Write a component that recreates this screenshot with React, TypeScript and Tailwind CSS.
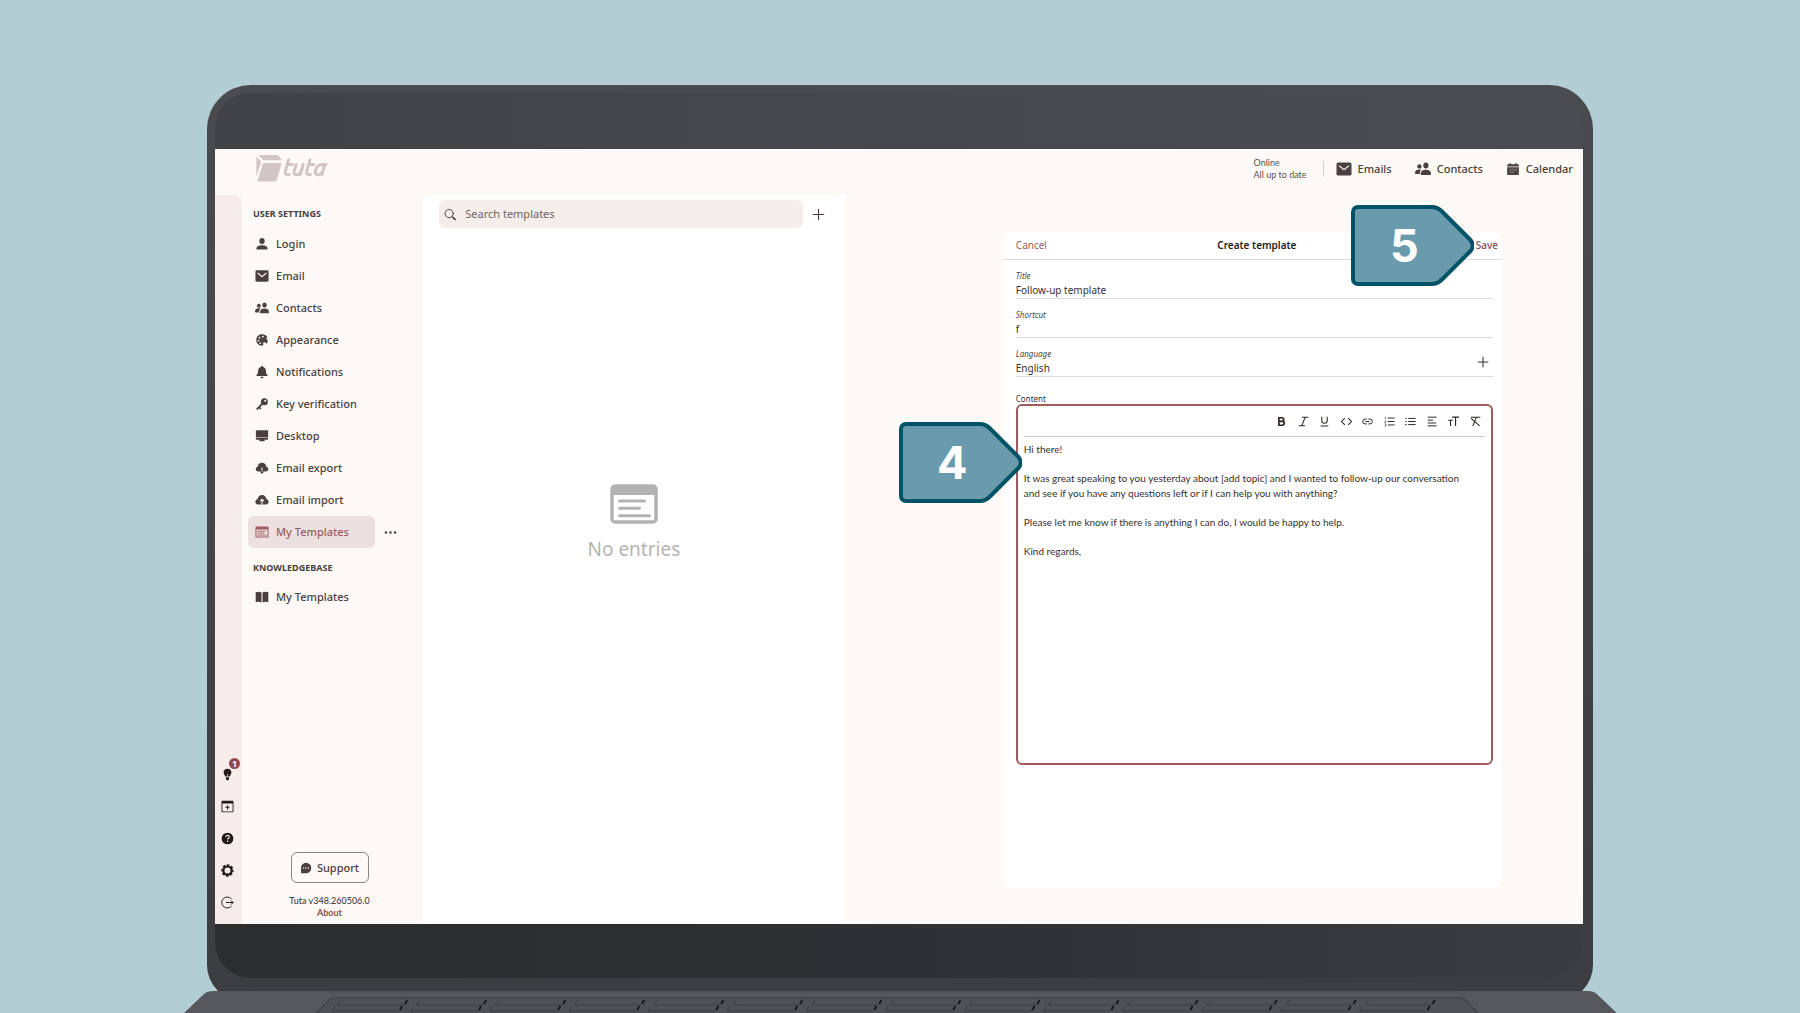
import type { ReactNode } from "react";

type IconProps = { name: string; className?: string };

// All glyphs are drawn on a 16 x 16 grid
const ICONS: Record<string, ReactNode> = {
  person: (
    <g fill="currentColor">
      <ellipse cx="8" cy="4.6" rx="3.1" ry="3.4" />
      <path d="M1.6 13.2c0-3 3.2-3.9 6.4-3.9s6.4.9 6.4 3.9c0 .8-.6 1.2-1.4 1.2H3c-.8 0-1.4-.4-1.4-1.2z" />
    </g>
  ),
  mail: (
    <g>
      <rect x="0.5" y="1.5" width="15" height="13" rx="1.6" fill="currentColor" />
      <path d="M3 4.6l5 4.2 5-4.2" fill="none" stroke="#fdf9f6" strokeWidth="1.2" />
    </g>
  ),
  people: (
    <g fill="currentColor">
      <circle cx="4.4" cy="5.4" r="2.2" />
      <path d="M0 12c0-2.6 1.8-3.6 4.4-3.6.7 0 1.4.1 1.9.3C5.3 9.7 4.7 10.9 4.7 13H.8c-.5 0-.8-.4-.8-1z" />
      <ellipse cx="10.9" cy="4.5" rx="2.6" ry="2.9" />
      <path d="M5.7 13c0-3.1 2.4-4.3 5.2-4.3S16 9.9 16 13c0 .6-.4 1-1 1H6.7c-.6 0-1-.4-1-1z" />
    </g>
  ),
  palette: (
    <g>
      <path
        d="M8 1.5C4.2 1.5 1.5 4.3 1.5 8s2.8 6.5 6.5 6.5c1.3 0 1.8-1 1.4-2-.5-1.2.2-2 1.4-2 1.6.2 2 1.5 2.9 1.5.6-.7.8-2.3.8-3.6 0-.9-1.6-.9-1.6-2 0-1 1.1-.9 1.1-1.8C12.900 2.700 10.600 1.500 8 1.500z"
        fill="currentColor"
      />
      <g fill="#fdf9f6">
        <circle cx="5.2" cy="5.3" r="1" />
        <circle cx="9" cy="4" r="1" />
        <circle cx="4" cy="8.6" r="1" />
        <circle cx="6" cy="11.5" r="1" />
      </g>
    </g>
  ),
  bell: (
    <g fill="currentColor">
      <path d="M8 1c.8 0 1.300.5 1.300 1.300 2.200.6 3.200 2.300 3.200 4.500 0 2.700.7 3.600 1.700 4.500.5.500.1 1.300-.6 1.300H2.400c-.7 0-1.100-.8-.6-1.300 1-.9 1.700-1.800 1.700-4.500 0-2.200 1-3.900 3.200-4.500C6.700 1.500 7.200 1 8 1z" />
      <path d="M6.200 13.400h3.600c0 1-.8 1.700-1.800 1.700s-1.800-.7-1.800-1.700z" />
    </g>
  ),
  key: (
    <g>
      <circle cx="10.700" cy="5.300" r="4" fill="currentColor" />
      <path d="M8.500 7.500L2.500 13.500M4.500 11.500l1.500 1.500" stroke="currentColor" strokeWidth="2.200" strokeLinecap="round" />
      <circle cx="11.700" cy="4.300" r="1.200" fill="#fdf9f6" />
    </g>
  ),
  desktop: (
    <g fill="currentColor">
      <path d="M2 1.500h12c.6 0 1 .4 1 1v7.200H1V2.500c0-.6.4-1 1-1z" />
      <path d="M1 10.300h14v.9c0 .6-.4 1-1 1h-3v1.900H5v-1.900H2c-.6 0-1-.4-1-1z" />
    </g>
  ),
  cloudDown: (
    <g>
      <path d="M3.800 12C2 12 .8 10.700.8 9.200c0-1.400 1-2.500 2.300-2.700C3.300 3.900 5.400 2 8 2s4.700 1.900 4.900 4.500c1.300.2 2.300 1.300 2.300 2.700 0 1.500-1.200 2.800-3 2.800z" fill="currentColor" />
      <path d="M8 7.500V11" stroke="#fdf9f6" strokeWidth="1.200" />
      <path d="M5.600 12h4.800L8 14.800z" fill="currentColor" />
    </g>
  ),
  cloudUp: (
    <g>
      <path d="M3.600 13C1.700 13 .4 11.600.4 9.900c0-1.500 1.100-2.700 2.500-2.900C3.300 4.300 5.400 2.300 8 2.300s4.700 2 5.100 4.700c1.400.2 2.500 1.400 2.500 2.900 0 1.700-1.300 3.100-3.200 3.100z" fill="currentColor" />
      <path d="M8 13.200V8M5.800 9.400L8 7.200l2.200 2.200" stroke="#fdf9f6" strokeWidth="1.200" fill="none" />
    </g>
  ),
  template: (
    <g>
      <path d="M1.500 1.600h13c.6 0 1 .4 1 1v10.800c0 .6-.4 1-1 1h-13c-.6 0-1-.4-1-1V2.600c0-.6.4-1 1-1zm.2 3.600v8h12.600v-8z" fill="currentColor" fillRule="evenodd" />
      <path d="M3.300 7.100h8.200M3.300 9.300h6.800M3.300 11.500h9.400" stroke="currentColor" strokeWidth="1" strokeLinecap="round" />
    </g>
  ),
  book: (
    <g fill="currentColor">
      <path d="M.8 2.600c2.200-.9 4.500-.9 6.600.2v11.400c-2.100-1-4.400-1-6.600-.2z" />
      <path d="M15.200 2.600c-2.200-.9-4.500-.9-6.600.2v11.400c2.100-1 4.400-1 6.600-.2z" />
    </g>
  ),
  calendar: (
    <g>
      <path d="M2.500 2.500h1.500V1.200h1.500v1.300h5V1.200H12v1.300h1.500c.7 0 1.200.5 1.200 1.200v1.500H1.300V3.700c0-.7.5-1.200 1.200-1.200zM1.300 6h13.400v7.600c0 .7-.5 1.200-1.200 1.200h-11c-.7 0-1.200-.5-1.200-1.200z" fill="currentColor" />
      <path d="M4 8.300h8.500M4 10.300h8.500M4 12.300h5" stroke="#fdf9f6" strokeOpacity="0.600" strokeWidth="0.700" strokeDasharray="1.500 0.800" />
    </g>
  ),
  search: (
    <g fill="none" stroke="currentColor" strokeLinecap="round">
      <circle cx="6.800" cy="6.800" r="5.400" strokeWidth="1.300" />
      <path d="M10.800 10.800l1 1" strokeWidth="1.300" />
      <path d="M12 12l2.400 2.400" strokeWidth="2.200" />
    </g>
  ),
  plus: <path d="M8 1.500v13M1.500 8h13" stroke="currentColor" strokeWidth="1.400" strokeLinecap="round" />,
  dots: (
    <g fill="currentColor">
      <circle cx="2.400" cy="8" r="1.500" />
      <circle cx="8" cy="8" r="1.500" />
      <circle cx="13.600" cy="8" r="1.500" />
    </g>
  ),
  bulb: (
    <g fill="currentColor">
      <path d="M8 .8c2.900 0 4.800 2 4.800 4.600 0 2.400-1.800 3.300-2.300 5.100h-5C5 8.700 3.200 7.800 3.200 5.400 3.200 2.800 5.100.8 8 .8z" />
      <path d="M5.900 11.400h4.200l-.3 2.600L8 15.500 6.200 14z" />
      <path d="M8 7v4" stroke="#f5ecea" strokeWidth="0.800" />
    </g>
  ),
  windowPlus: (
    <g>
      <path d="M2 .8h12c.8 0 1.400.6 1.400 1.400v11.600c0 .8-.6 1.400-1.400 1.400H2c-.8 0-1.400-.6-1.400-1.400V2.200C.6 1.400 1.200.8 2 .8zm-.3 3.400v9.400c0 .3.200.5.500.5h11.600c.3 0 .5-.2.500-.5V4.200z" fill="currentColor" fillRule="evenodd" />
      <path d="M8 6.400v5.200M5.400 9h5.200" stroke="currentColor" strokeWidth="1.300" />
    </g>
  ),
  help: (
    <g>
      <circle cx="8" cy="8" r="7.200" fill="currentColor" />
      <path d="M5.900 6.300C5.900 5 6.800 4.200 8.100 4.200s2.100.8 2.100 1.900c0 1.500-2.100 1.700-2.100 3.200M8.100 10.600v1.600" fill="none" stroke="#f5ecea" strokeWidth="1.400" />
    </g>
  ),
  gear: (
    <g fill="none" stroke="currentColor">
      <circle cx="8" cy="8" r="6.200" strokeWidth="2.800" strokeDasharray="3.200 1.670" strokeDashoffset="1.600" />
      <circle cx="8" cy="8" r="5" strokeWidth="2.600" />
    </g>
  ),
  logout: (
    <g fill="none" stroke="currentColor" strokeWidth="1.200" strokeLinecap="round" strokeLinejoin="round">
      <path d="M12.600 3.200A6.800 6.800 0 1 0 12.600 12.800" />
      <path d="M6.500 8h8.300M12.600 5.800L14.800 8l-2.200 2.200" />
    </g>
  ),
  chat: (
    <g>
      <path d="M8 1a7 7 0 1 1 0 14H1.400V8A6.800 6.800 0 0 1 8 1z" fill="currentColor" />
      <g fill="#fdf9f6">
        <circle cx="4.900" cy="8" r="0.900" />
        <circle cx="8" cy="8" r="0.900" />
        <circle cx="11.100" cy="8" r="0.900" />
      </g>
    </g>
  ),
  bold: (
    <path d="M4.200 2.500h4.300a2.700 2.700 0 0 1 0 5.400H4.200zM4.200 7.900h5a2.800 2.800 0 0 1 0 5.600h-5z" fill="none" stroke="currentColor" strokeWidth="2.400" />
  ),
  italic: <path d="M6 1.700h9M1 14.300h9M10.500 1.700L5.500 14.300" fill="none" stroke="currentColor" strokeWidth="1.500" />,
  underline: <path d="M4 1v5.500a4 4 0 0 0 8 0V1M2.500 14.500h11" fill="none" stroke="currentColor" strokeWidth="1.500" />,
  code: <path d="M5.500 3L.8 8l4.700 5M10.500 3l4.700 5-4.700 5" fill="none" stroke="currentColor" strokeWidth="1.500" />,
  link: (
    <path d="M7 4.500H4.500a3.500 3.500 0 0 0 0 7H7M9 4.500h2.500a3.500 3.500 0 0 1 0 7H9M5 8h6" fill="none" stroke="currentColor" strokeWidth="1.400" />
  ),
  numbered: (
    <g fill="none" stroke="currentColor">
      <path d="M5.500 3h10M5.500 8h10M5.500 13h10" strokeWidth="1.400" />
      <path d="M1.800 1.200v3.200M1 7h1.600v1.300L1 9.600h1.800M1 11.600h1.600v3.200H1" strokeWidth="0.900" />
    </g>
  ),
  bullets: (
    <g fill="none" stroke="currentColor">
      <path d="M4.500 3.500h11M4.500 8h11M4.500 12.500h11" strokeWidth="1.400" />
      <path d="M.5 3.500h1.800M.5 8h1.800M.5 12.500h1.800" strokeWidth="1.800" />
    </g>
  ),
  align: <path d="M1 1.700h13M1 6h8M1 10.200h12M1 14.300h13" fill="none" stroke="currentColor" strokeWidth="1.400" />,
  size: <path d="M6 1.700h10M11 1.700v13M.5 6.200h6.500M3.700 6.200v8.500" fill="none" stroke="currentColor" strokeWidth="1.600" />,
  clear: <path d="M1.500 1.700h13.500M9.500 1.700L4 14.800M1.500 3.500l12.500 11" fill="none" stroke="currentColor" strokeWidth="1.500" />,
};

function Icon({ name, className }: IconProps) {
  return (
    <svg viewBox="0 0 16 16" className={className} aria-hidden="true">
      {ICONS[name]}
    </svg>
  );
}

const settings = [
  { icon: "person", label: "Login" },
  { icon: "mail", label: "Email" },
  { icon: "people", label: "Contacts" },
  { icon: "palette", label: "Appearance" },
  { icon: "bell", label: "Notifications" },
  { icon: "key", label: "Key verification" },
  { icon: "desktop", label: "Desktop" },
  { icon: "cloudDown", label: "Email export" },
  { icon: "cloudUp", label: "Email import" },
];

const railItems = [
  { icon: "bulb", label: "News", badge: "1" },
  { icon: "windowPlus", label: "New window" },
  { icon: "help", label: "Help" },
  { icon: "gear", label: "Settings" },
  { icon: "logout", label: "Logout" },
];

const tools = ["bold", "italic", "underline", "code", "link", "numbered", "bullets", "align", "size", "clear"];

function Logo() {
  return (
    <a href="#" aria-label="tuta" className="text-[#d2c5c5]">
      <svg viewBox="0 0 72 28" className="h-7 w-[72px]" fill="currentColor">
        <path d="M3.500 0h17.300c.8 0 1.300.3 1.800.8l3 3.600c.3.400.1.800-.4.800H7.200L3 .8C2.700.4 2.900 0 3.500 0z" />
        <path d="M.5 1.200L5 6.600.8 20.800c0 .3-.4.200-.4-.1V1.300z" />
        <path d="M8.300 8h16.300c.7 0 1 .5.800 1.200l-4.800 16.200c-.3.800-.7 1.200-1.600 1.200H2.200c-.6 0-.8-.4-.6-1L6.700 9.200C7 8.400 7.500 8 8.300 8z" />
        <g fill="none" stroke="currentColor" strokeWidth="3" strokeLinecap="round" strokeLinejoin="round">
          <path d="M32.600 5l-3.400 11.600c-.5 2 .4 3 2.200 3h1.600M31.400 9.400h5" />
          <path d="M40.200 9.400l-2 6.600c-.8 2.600 0 3.700 2 3.700 3 0 4.500-1.600 5.400-4.700l1.600-5.600-2.800 10.200" />
          <path d="M54 5l-3.400 11.600c-.5 2 .4 3 2.200 3h1.600M52.800 9.400h5" />
          <path d="M70 9.600c-5.500-.8-8.800.2-10.200 4.600-1.200 3.800-.3 5.500 2 5.500 2.800 0 4.500-2 5.400-5l1.500-5.300-2.700 10.200" />
        </g>
      </svg>
    </a>
  );
}

function Header() {
  return (
    <header className="flex h-[46px] items-start justify-between pt-[6px] pr-[10px] pl-[41px] text-[#4a4040]">
      <Logo />
      <div className="flex h-7 items-center">
        <div className="mr-4 font-['Lato',sans-serif] text-[9px] leading-[12px] text-[#5b5251]">
          <p>Online</p>
          <p>All up to date</p>
        </div>
        <span className="mr-3 h-4 w-px bg-[#d5cccb]" />
        <nav className="flex items-center gap-[23px] text-[11px] font-medium">
          <a href="#" className="flex items-center gap-[6px]">
            <Icon name="mail" className="h-4 w-4" />
            Emails
          </a>
          <a href="#" className="flex items-center gap-[6px]">
            <Icon name="people" className="h-4 w-4" />
            Contacts
          </a>
          <a href="#" className="flex items-center gap-[6px]">
            <Icon name="calendar" className="h-[14px] w-[14px]" />
            Calendar
          </a>
        </nav>
      </div>
    </header>
  );
}

function Rail() {
  return (
    <nav className="flex w-[27px] flex-col items-center justify-end gap-[19px] rounded-tr-lg bg-[#f6edeb] pr-[2px] pb-[15px] text-[#231917]">
      {railItems.map((item) => (
        <button key={item.label} type="button" aria-label={item.label} className="relative">
          <Icon name={item.icon} className="h-[13px] w-[13px]" />
          {item.badge && (
            <span className="absolute -top-[10px] left-2 flex h-[11px] w-[11px] items-center justify-center rounded-full bg-[#8f4a4e] text-[9px] font-bold text-white">
              {item.badge}
            </span>
          )}
        </button>
      ))}
    </nav>
  );
}

function Sidebar() {
  return (
    <aside className="flex w-[181px] flex-col pt-[11px] pl-[6px] text-[11px] font-medium text-[#4a4040]">
      <h2 className="pl-[5px] text-[9px] leading-4 font-bold">USER SETTINGS</h2>
      <ul className="pt-[6px]">
        {settings.map((item) => (
          <li key={item.label}>
            <a href="#" className="flex h-8 items-center gap-[7px] pl-[7px]">
              <Icon name={item.icon} className="h-[14px] w-[14px]" />
              {item.label}
            </a>
          </li>
        ))}
        <li className="flex h-8 items-center gap-[9px]">
          <a href="#" className="flex h-8 w-[127px] items-center gap-[7px] rounded-md bg-[#ede0e0] pl-[7px] text-[#a05a60]">
            <Icon name="template" className="h-[14px] w-[14px]" />
            My Templates
          </a>
          <button type="button" aria-label="More">
            <Icon name="dots" className="h-[13px] w-[13px]" />
          </button>
        </li>
      </ul>
      <h2 className="mt-3 pl-[5px] text-[9px] leading-4 font-bold">KNOWLEDGEBASE</h2>
      <a href="#" className="mt-[5px] flex h-8 items-center gap-[7px] pl-[7px]">
        <Icon name="book" className="h-[14px] w-[14px]" />
        My Templates
      </a>
      <div className="mt-auto flex flex-col items-center pr-3 pb-[5px] font-['Lato',sans-serif] text-[9px] leading-[12px]">
        <button
          type="button"
          className="mb-3 flex h-[31px] w-[78px] items-center justify-center gap-[5px] rounded-md border border-[#8d8584] font-['Noto_Sans',sans-serif] text-[11px]"
        >
          <Icon name="chat" className="h-3 w-3" />
          Support
        </button>
        <p>Tuta v348.260506.0</p>
        <a href="#" className="font-bold text-[#8f4a4e]">
          About
        </a>
      </div>
    </aside>
  );
}

function TemplateList() {
  return (
    <section className="flex flex-[4] flex-col rounded-tl-lg bg-white text-[#4a4040]">
      <div className="flex items-center gap-[9px] pt-[5px] pr-5 pl-4">
        <label className="flex h-7 flex-1 items-center gap-[9px] rounded-md bg-[#f5edea] pl-[5px]">
          <Icon name="search" className="h-[13px] w-[13px]" />
          <input
            type="text"
            aria-label="Search templates"
            placeholder="Search templates"
            className="w-full bg-transparent text-[11px] outline-none placeholder:text-[#6d6463]"
          />
        </label>
        <button type="button" aria-label="Add template">
          <Icon name="plus" className="h-[13px] w-[13px]" />
        </button>
      </div>
      <div className="flex flex-1 flex-col items-center justify-center pb-[106px] text-[#b4b3b3]">
        <svg viewBox="0 0 48 40" className="h-10 w-12" fill="none" stroke="currentColor" aria-hidden="true">
          <rect x="2" y="2" width="44" height="36" rx="3" strokeWidth="3.500" />
          <path d="M2 3h44v8H2z" fill="currentColor" stroke="none" />
          <path d="M9.500 17h25M9.500 24.300h20M9.500 31.700h30" strokeWidth="3" strokeLinecap="round" />
        </svg>
        <p className="mt-[11px] text-[19px] leading-7">No entries</p>
      </div>
    </section>
  );
}

function Callout({ step }: { step: string }) {
  return (
    <div className="relative flex h-[81px] w-[123px] items-center justify-center pr-4">
      <svg viewBox="0 0 123 81" className="absolute inset-0" aria-hidden="true">
        <path
          d="M7 2h74c4 0 7 1.500 10 4.500l28 28c3.500 3.600 3.500 8.400 0 12l-28 28c-3 3-6 4.500-10 4.500H7c-3 0-5-2-5-5V7c0-3 2-5 5-5z"
          fill="#6a9bac"
          stroke="#005366"
          strokeWidth="4"
          strokeLinejoin="round"
        />
      </svg>
      <span className="relative font-['Inter',sans-serif] text-[45px] leading-none font-bold text-white">{step}</span>
    </div>
  );
}

type FieldProps = { id: string; label: string; value: string; children?: ReactNode };

function Field({ id, label, value, children }: FieldProps) {
  return (
    <div className="flex h-[39px] items-center border-b border-[#dddada]">
      <div className="flex-1 pt-2">
        <label htmlFor={id} className="block text-[8px] leading-[15px] text-[#4d4543] italic">
          {label}
        </label>
        <input id={id} type="text" defaultValue={value} className="block h-[15px] w-full bg-transparent text-[10px] outline-none" />
      </div>
      {children}
    </div>
  );
}

function Editor() {
  return (
    <div className="relative flex flex-1 flex-col rounded-md border-2 border-[#a05a60] px-[6px] pt-[5px]">
      <div className="flex h-[26px] items-center justify-end border-b border-[#d8c8c8] pr-1 pb-1 text-[#2a2321]">
        <div className="flex w-[205px] justify-between">
          {tools.map((tool) => (
            <button key={tool} type="button" aria-label={tool}>
              <Icon name={tool} className="h-[11px] w-[11px]" />
            </button>
          ))}
        </div>
      </div>
      <div
        contentEditable
        suppressContentEditableWarning
        role="textbox"
        aria-label="Content"
        className="flex flex-1 flex-col gap-[14px] pt-[5px] font-['Lato',sans-serif] text-[10px] leading-[15px] outline-none"
      >
        <p>Hi there!</p>
        <p>
          It was great speaking to you yesterday about [add topic] and I wanted to follow-up our conversation
          <br />
          and see if you have any questions left or if I can help you with anything?
        </p>
        <p>Please let me know if there is anything I can do, I would be happy to help.</p>
        <p>Kind regards,</p>
      </div>
      <div className="absolute top-4 -left-[119px]">
        <Callout step="4" />
      </div>
    </div>
  );
}

function TemplateDialog() {
  return (
    <form className="mt-[37px] mr-[81px] mb-9 ml-[158px] flex flex-1 flex-col rounded-[10px] bg-white text-[#38302e]">
      <div className="relative grid h-7 grid-cols-3 items-center border-b border-[#dddada] pr-1 pl-[13px] text-[10px]">
        <button type="button" className="justify-self-start text-[#a05a60]">
          Cancel
        </button>
        <h1 className="justify-self-center font-semibold text-[#231917]">Create template</h1>
        <button type="submit" className="justify-self-end font-medium text-[#8f4a4e]">
          Save
        </button>
        <div className="absolute -top-[27px] right-7">
          <Callout step="5" />
        </div>
      </div>
      <div className="flex flex-1 flex-col pr-[9px] pb-[123px] pl-[13px]">
        <Field id="title" label="Title" value="Follow-up template" />
        <Field id="shortcut" label="Shortcut" value="f" />
        <Field id="language" label="Language" value="English">
          <button type="button" aria-label="Add language" className="pt-[9px] pr-1">
            <Icon name="plus" className="h-3 w-3" />
          </button>
        </Field>
        <p className="mt-4 text-[8px] leading-[11px]">Content</p>
        <Editor />
      </div>
    </form>
  );
}

// Top edge of the keyboard deck, with the first two rows of keys in view
function Deck() {
  const keys = Array.from({ length: 14 }, (_, i) => i);
  return (
    <svg
      viewBox="0 0 1432 22"
      preserveAspectRatio="none"
      className="relative mx-auto -mt-[10px] block h-[22px] w-[79.6%]"
      aria-hidden="true"
    >
      <path d="M0 22L20 3q3-3 9-3h1374q6 0 9 3l20 19z" fill="#56575c" />
      <path d="M144 0h1128v2H144z" fill="#515257" />
      <path d="M132 22l13-13q2-2 5-2h1126q3 0 5 2l12 13" fill="#505156" stroke="#3a3b40" strokeWidth="1" />
      <g fill="none" stroke="#34353a" strokeWidth="0.700">
        {keys.map((i) => (
          <path key={i} d={`M${157 + i * 79} 9l-4 5h66l4-5M${151 + i * 79} 15l-3 5h66l4-5`} />
        ))}
      </g>
      <g fill="none" stroke="#17181b" strokeWidth="1.800">
        {keys.map((i) => (
          <path key={i} d={`M${223 + i * 79} 9l-2 4M${218 + i * 79} 15l-2 4`} />
        ))}
      </g>
    </svg>
  );
}

export default function App() {
  return (
    <div className="flex h-screen flex-col overflow-hidden bg-[#b3cdd4] pt-[85px] font-['Noto_Sans',sans-serif]">
      <div className="mx-auto flex w-[77%] flex-1 flex-col rounded-t-[44px] rounded-b-[36px] bg-linear-to-b from-[#4a4b4f] to-[#3c3d41] pt-2 pr-[10px] pb-[23px] pl-2">
        <div className="flex flex-1 flex-col overflow-hidden rounded-[36px]">
          <div className="h-14 bg-linear-to-r from-[#424347] to-[#4b4c51]" />
          <div className="flex flex-1 flex-col bg-[#fdf9f6]">
            <Header />
            <div className="flex flex-1">
              <Rail />
              <Sidebar />
              <TemplateList />
              <main className="flex flex-[7] flex-col">
                <TemplateDialog />
              </main>
            </div>
          </div>
          <div className="h-[54px] bg-linear-to-r from-[#2c2d2f] via-[#2f3033] to-[#3b3c40]" />
        </div>
      </div>
      <Deck />
    </div>
  );
}
